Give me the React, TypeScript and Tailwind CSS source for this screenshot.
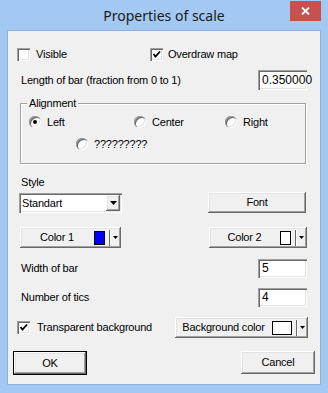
import React from "react";

const raised =
  "bg-[#f0f0f0] shadow-[inset_-1px_-1px_0_#696969,inset_1px_1px_0_#ffffff,inset_-2px_-2px_0_#a0a0a0,inset_2px_2px_0_#e3e3e3]";
const sunken =
  "bg-white shadow-[inset_1px_1px_0_#a0a0a0,inset_2px_2px_0_#696969,inset_-1px_-1px_0_#ffffff,inset_-2px_-2px_0_#e3e3e3]";

function Check({ checked }: { checked: boolean }) {
  return (
    <div className={`w-[13px] h-[13px] shrink-0 ${sunken} flex items-center justify-center`}>
      {checked && (
        <svg width="13" height="13" viewBox="0 0 13 13">
          <path d="M3.5 6 L5.5 8.5 L10 3.5" fill="none" stroke="#000" strokeWidth="1.8" />
        </svg>
      )}
    </div>
  );
}

function Radio({ checked }: { checked: boolean }) {
  return (
    <div className="w-[12px] h-[12px] shrink-0 rounded-full bg-white shadow-[inset_1px_1px_0_#a0a0a0,inset_2px_2px_0_#696969,inset_-1px_-1px_0_#ffffff,inset_-2px_-2px_0_#e3e3e3] flex items-center justify-center">
      {checked && <div className="w-[4px] h-[4px] rounded-full bg-black" />}
    </div>
  );
}

function SmallArrow() {
  return (
    <svg width="5" height="3" viewBox="0 0 5 3">
      <path d="M0 0 H5 L2.5 3 Z" fill="#000" />
    </svg>
  );
}

function ColorButton({
  label,
  color,
  swatchW,
  className,
}: {
  label: string;
  color: string;
  swatchW: number;
  className: string;
}) {
  return (
    <div className={`${raised} ${className} flex items-center h-[21px]`}>
      <div className="flex-1 text-center">{label}</div>
      <div
        className="h-[14px] border border-black shrink-0"
        style={{ width: swatchW, background: color }}
      />
      <div className="ml-[4px] w-[1px] h-[16px] bg-[#696969] shrink-0" />
      <div className="w-[1px] h-[16px] bg-white shrink-0" />
      <div className="ml-[2px] mr-[3px] flex items-center">
        <SmallArrow />
      </div>
    </div>
  );
}

function Field({ value }: { value: string }) {
  return (
    <div className={`${sunken} w-[49px] h-full flex items-center pl-[4px] text-[12px] tracking-normal`}>
      {value}
    </div>
  );
}

export default function App() {
  return (
    <div
      className="w-[328px] h-[393px] bg-[#a3c9f2] flex flex-col px-[7px] pb-[8px] text-black text-[11px] leading-[13px] tracking-[-0.2px]"
      style={{ fontFamily: '"Liberation Sans", Arial, sans-serif' }}
    >
      {/* Title bar */}
      <div className="h-[30px] flex items-start -mx-[7px] tracking-normal">
        <div className="w-[38px] shrink-0" />
        <div
          className="flex-1 text-center pt-[6px] text-[14px] leading-[20px] text-[#1a1a1a]"
          style={{ fontFamily: '"Noto Sans", "Open Sans", sans-serif' }}
        >
          Properties of scale
        </div>
        <div className="w-[31px] h-[20px] mt-[1px] mr-[7px] bg-[#c75050] flex items-center justify-center shrink-0">
          <svg width="9" height="8" viewBox="0 0 9 8">
            <path d="M1 0.5 L8 7.5 M8 0.5 L1 7.5" stroke="#fff" strokeWidth="1.8" />
          </svg>
        </div>
      </div>

      {/* Client area */}
      <div className="flex-1 border border-[#8fb3dc] bg-[#f0f0f0] flex flex-col">
        {/* Row 1 */}
        <div className="mt-[17px] h-[13px] flex items-center pl-[9px]">
          <div className="w-[133px] flex items-center gap-[6px]">
            <Check checked={false} />
            <span>Visible</span>
          </div>
          <div className="flex items-center gap-[5px]">
            <Check checked={true} />
            <span>Overdraw map</span>
          </div>
        </div>

        {/* Row 2 */}
        <div className="mt-[9px] h-[20px] flex items-center justify-between pl-[13px] pr-[13px]">
          <span>Length of bar (fraction from 0 to 1)</span>
          <Field value="0.350000" />
        </div>

        {/* Alignment group */}
        <div className="mt-[13px] ml-[12px] w-[286px] h-[61px] border border-[#a0a0a0] shadow-[1px_1px_0_#ffffff,inset_1px_1px_0_#ffffff] relative flex flex-col">
          <span className="absolute left-[6px] -top-[7px] px-[2px] bg-[#f0f0f0]">Alignment</span>
          <div className="mt-[12px] h-[12px] flex items-center pl-[8px]">
            <div className="w-[105px] flex items-center gap-[6px]">
              <Radio checked={true} />
              <span>Left</span>
            </div>
            <div className="w-[91px] flex items-center gap-[6px]">
              <Radio checked={false} />
              <span>Center</span>
            </div>
            <div className="flex items-center gap-[6px]">
              <Radio checked={false} />
              <span>Right</span>
            </div>
          </div>
          <div className="mt-[10px] h-[12px] flex items-center pl-[55px] gap-[6px]">
            <Radio checked={false} />
            <span>?????????</span>
          </div>
        </div>

        {/* Style label */}
        <div className="mt-[11px] h-[14px] flex items-center pl-[13px]">Style</div>

        {/* Select + Font */}
        <div className="mt-[3px] h-[21px] flex items-start justify-between pl-[11px] pr-[14px]">
          <div className={`${sunken} self-end w-[103px] h-[20px] flex items-center pl-[3px] pr-[2px]`}>
            <span className="flex-1">Standart</span>
            <div className={`${raised} w-[14px] h-[16px] flex items-center justify-center`}>
              <svg width="7" height="4" viewBox="0 0 7 4">
                <path d="M0 0 H7 L3.5 4 Z" fill="#000" />
              </svg>
            </div>
          </div>
          <div className={`${raised} w-[98px] h-[21px] flex items-center justify-center`}>Font</div>
        </div>

        {/* Color buttons */}
        <div className="mt-[14px] h-[21px] flex items-center justify-between pl-[12px] pr-[13px]">
          <ColorButton label="Color 1" color="#0000ff" swatchW={11} className="w-[101px]" />
          <ColorButton label="Color 2" color="#ffffff" swatchW={11} className="w-[98px]" />
        </div>

        {/* Width of bar */}
        <div className="mt-[11px] h-[19px] flex items-center justify-between pl-[13px] pr-[13px]">
          <span>Width of bar</span>
          <Field value="5" />
        </div>

        {/* Number of tics */}
        <div className="mt-[10px] h-[19px] flex items-center justify-between pl-[13px] pr-[13px]">
          <span>Number of tics</span>
          <Field value="4" />
        </div>

        {/* Transparent row */}
        <div className="mt-[10px] h-[21px] flex items-center justify-between pl-[9px] pr-[12px]">
          <div className="flex items-center gap-[7px]">
            <Check checked={true} />
            <span>Transparent background</span>
          </div>
          <ColorButton label="Background color" color="#ffffff" swatchW={20} className="w-[133px]" />
        </div>

        {/* OK / Cancel */}
        <div className="mt-[13px] flex items-start justify-between pl-[5px] pr-[5px]">
          <div className="w-[74px] h-[24px] border border-black">
            <div className={`${raised} w-full h-full flex items-center justify-center`}>OK</div>
          </div>
          <div className={`${raised} w-[74px] h-[23px] flex items-center justify-center`}>Cancel</div>
        </div>
      </div>
    </div>
  );
}
